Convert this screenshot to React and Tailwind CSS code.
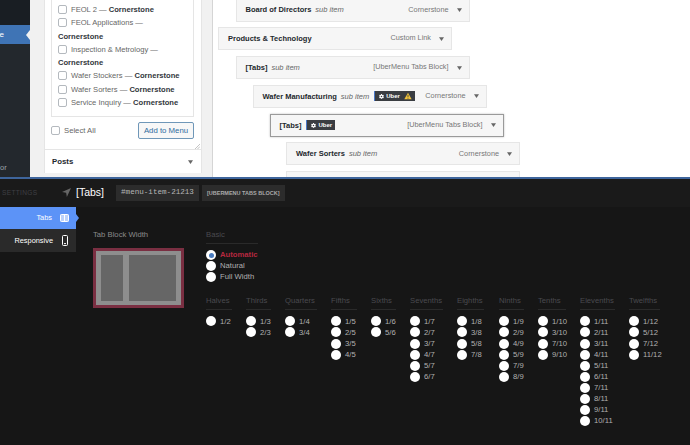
import React from "react";
import { FaCog } from "react-icons/fa";

function Check({ children }) {
  return (
    <div className="text-[7.6px] leading-[13.3px] text-[#666]">
      <span className="inline-block w-[9px] h-[9px] border border-[#b4b9be] rounded-[2px] bg-white align-[-2px] mr-[4px]" />
      {children}
    </div>
  );
}

function Bold({ children }) {
  return <b className="text-[#32373c]">{children}</b>;
}

function MenuItem({ indent, title, sub, type, badge, warn, active }) {
  return (
    <div
      className={`flex items-center h-[23px] mb-[5.8px] pl-[9px] pr-[7px] bg-[#f6f6f6] border ${active ? "border-[#9a9a9a] shadow-[0_0_2px_rgba(0,0,0,0.25)]" : "border-[#e6e6e6]"} w-[234px] shrink-0`}
      style={{ marginLeft: indent }}
    >
      <span className="text-[7.5px] font-bold text-[#23282d] whitespace-nowrap">{title}</span>
      {sub && <span className="text-[7.5px] italic text-[#666] ml-[4px] whitespace-nowrap">sub item</span>}
      {badge && (
        <span className="ml-[5px] h-[10px] flex items-center gap-[2px] bg-[#3a3d42] border-l border-[#4a78c8] pl-[4px] pr-[3px] text-[6px] font-bold text-white whitespace-nowrap">
          <FaCog className="w-[5px] h-[5px]" />Uber
          {warn && (
            <svg viewBox="0 0 10 10" className="w-[8px] h-[8px] ml-[2px]">
              <path d="M5 .8 9.6 9.2H.4Z" fill="#f0c33c" />
              <path d="M5 3.5v3M5 7.4v.9" stroke="#333" strokeWidth="1" />
            </svg>
          )}
        </span>
      )}
      <span className="ml-auto text-[7.3px] text-[#777] whitespace-nowrap">{type}</span>
      <svg viewBox="0 0 8 6" className="w-[5px] h-[4px] ml-[8px]"><path d="M0 0h8L4 6Z" fill="#666" /></svg>
    </div>
  );
}

function Radio({ label, selected, red }) {
  return (
    <div className="flex items-center h-[11.1px] gap-[4px]">
      <span className="w-[10px] h-[10px] rounded-full bg-white flex items-center justify-center shrink-0">
        {selected && <span className="w-[5px] h-[5px] rounded-full bg-[#4a7cc0]" />}
      </span>
      <span className={`text-[7.7px] whitespace-nowrap ${red ? "font-bold text-[#b5283f]" : "text-[#b0b0b0]"}`}>{label}</span>
    </div>
  );
}

const groups = [
  ["Halves", 40, 26, ["1/2"]],
  ["Thirds", 39, 25, ["1/3", "2/3"]],
  ["Quarters", 46, 32, ["1/4", "3/4"]],
  ["Fifths", 40, 26, ["1/5", "2/5", "3/5", "4/5"]],
  ["Sixths", 39, 25, ["1/6", "5/6"]],
  ["Sevenths", 47, 33, ["1/7", "2/7", "3/7", "4/7", "5/7", "6/7"]],
  ["Eighths", 42, 27, ["1/8", "3/8", "5/8", "7/8"]],
  ["Ninths", 39, 25, ["1/9", "2/9", "4/9", "5/9", "7/9", "8/9"]],
  ["Tenths", 42, 28, ["1/10", "3/10", "7/10", "9/10"]],
  ["Elevenths", 49, 35, ["1/11", "2/11", "3/11", "4/11", "5/11", "6/11", "7/11", "8/11", "9/11", "10/11"]],
  ["Twelfths", 46, 31, ["1/12", "5/12", "7/12", "11/12"]],
];

function Group({ name, width, line, items }) {
  return (
    <div style={{ width }} className="shrink-0">
      <div className="text-[7.7px] text-[#4a4a4f] leading-[10px] pb-[3px] border-b border-[#2a2a2a] whitespace-nowrap" style={{ width: line }}>{name}</div>
      <div className="mt-[6px]">
        {items.map((i) => <Radio key={i} label={i} />)}
      </div>
    </div>
  );
}

export default function App() {
  return (
    <div className="w-[690px] h-[445px] overflow-hidden flex flex-col bg-[#161616] antialiased" style={{ fontFamily: '"Liberation Sans", Arial, sans-serif' }}>
      <div className="h-[177px] shrink-0 flex overflow-hidden bg-[#f1f1f1]">
        {/* WP admin sidebar */}
        <div className="w-[30px] shrink-0 bg-[#23282d] flex flex-col relative">
          <div className="h-[25px] bg-[#191e23]" />
          <div className="h-[19px] bg-[#3f74b5] flex items-center justify-end pr-[26px] text-[8px] text-white relative">
            e
            <span className="absolute right-0 top-[5px] w-0 h-0 border-y-[5px] border-y-transparent border-r-[4px] border-r-[#f1f1f1]" />
          </div>
          <div className="mt-auto mb-[4px] text-[7.5px] leading-[10px] text-[#9ea3a8]">or</div>
        </div>
        {/* menu panel column */}
        <div className="w-[14px] shrink-0" />
        <div className="w-[157.5px] h-[173px] shrink-0 bg-white border-x border-[#e5e5e5] flex flex-col relative">
          <div className="ml-[6px] w-[143px] h-[117px] shrink-0 border border-t-0 border-[#e5e5e5] pl-[6px] pt-[3px] overflow-hidden">
            <Check>FEOL 2 — <Bold>Cornerstone</Bold></Check>
            <Check>FEOL Applications —<br /><Bold>Cornerstone</Bold></Check>
            <Check>Inspection &amp; Metrology —<br /><Bold>Cornerstone</Bold></Check>
            <Check>Wafer Stockers — <Bold>Cornerstone</Bold></Check>
            <Check>Wafer Sorters — <Bold>Cornerstone</Bold></Check>
            <Check>Service Inquiry — <Bold>Cornerstone</Bold></Check>
          </div>
          <div className="flex items-center justify-between ml-[6px] w-[143px] mt-[5px]">
            <span className="flex items-center gap-[4px] text-[7.7px] text-[#666]">
              <span className="w-[9px] h-[9px] border border-[#b4b9be] rounded-[2px]" />Select All
            </span>
            <span className="h-[17px] w-[56px] flex items-center justify-center border border-[#6f97b8] rounded-[2px] bg-[#f7f7f7] text-[7.8px] text-[#2f6c9e]">Add to Menu</span>
          </div>
          <svg viewBox="0 0 5 5" className="absolute right-[1px] top-[144px] w-[5px] h-[5px]"><path d="M0 5 5 0M2.5 5 5 2.5" stroke="#aaa" strokeWidth=".7" /></svg>
          <div className="mt-[10px] border-t border-[#e5e5e5] h-[24px] flex items-center justify-between px-[7px]">
            <span className="text-[7.8px] font-bold text-[#23282d]">Posts</span>
            <svg viewBox="0 0 8 6" className="w-[5px] h-[4px] mr-[1px]"><path d="M0 0h8L4 6Z" fill="#666" /></svg>
          </div>
        </div>
        <div className="w-[10.5px] shrink-0" />
        {/* menu structure */}
        <div className="flex-1 bg-white border-l border-[#d5d5d5] pl-[5px] flex flex-col overflow-hidden">
          <div className="-mt-[1.5px]">
            <MenuItem indent={17.5} title="Board of Directors" sub type="Cornerstone" />
            <MenuItem indent={0} title="Products & Technology" type="Custom Link" />
            <MenuItem indent={17.5} title="[Tabs]" sub type="[UberMenu Tabs Block]" />
            <MenuItem indent={34.5} title="Wafer Manufacturing" sub badge warn type="Cornerstone" />
            <MenuItem indent={51.5} title="[Tabs]" badge active type="[UberMenu Tabs Block]" />
            <MenuItem indent={68} title="Wafer Sorters" sub type="Cornerstone" />
            <div className="ml-[68px] w-[234px] h-[23px] bg-[#f6f6f6] border border-[#e6e6e6]" />
          </div>
        </div>
      </div>
      <div className="h-[2px] shrink-0 bg-[#3e659c]" />
      {/* Settings header */}
      <div className="h-[27.5px] shrink-0 flex items-center bg-[#1a1a1a]">
        <span className="ml-[2px] text-[6.6px] tracking-[0.3px] text-[#3f3f44] w-[60px]">SETTINGS</span>
        <svg viewBox="0 0 10 10" className="w-[9px] h-[9px]"><path d="M10 0 0 4.5l4.6.8L5.4 10Z" fill="#666" /></svg>
        <span className="ml-[5px] text-[10.5px] text-white">[Tabs]</span>
        <span className="ml-[12px] h-[16px] flex items-center px-[5px] bg-[#2c2c2c] font-['Liberation_Mono'] text-[7.6px] text-[#b5b5b5]">#menu-item-21213</span>
        <span className="ml-[3px] h-[16px] flex items-center px-[5px] bg-[#2c2c2c] text-[5.5px] font-bold text-[#aaa]">[UBERMENU TABS BLOCK]</span>
      </div>
      {/* Body */}
      <div className="flex-1 flex bg-[#161616]">
        <div className="w-[76px] shrink-0 flex flex-col">
          <div className="h-[22.5px] bg-[#5c93f7] flex items-center justify-end pr-[7px] gap-[8px] text-[7.4px] text-white relative">
            Tabs
            <svg viewBox="0 0 9 8" className="w-[9px] h-[8px]"><rect x=".5" y=".5" width="8" height="7" rx=".8" fill="#bcd2fb" stroke="#fff" /><path d="M4.5 .5v7" stroke="#fff" /></svg>
            <span className="absolute -right-[3px] top-[7px] w-0 h-0 border-y-[4px] border-y-transparent border-l-[3px] border-l-[#5c93f7]" />
          </div>
          <div className="h-[23px] bg-[#2a2a2a] flex items-center justify-end pr-[8px] gap-[9px] text-[7.4px] text-white">
            Responsive
            <svg viewBox="0 0 6 11" className="w-[6px] h-[11px]"><rect x=".5" y=".5" width="5" height="10" rx="1" fill="none" stroke="#fff" /><path d="M2 8.6h2" stroke="#fff" /></svg>
          </div>
        </div>
        <div className="flex-1 flex pl-[17px] pt-[22px]">
          <div className="w-[113px] shrink-0">
            <div className="text-[7.7px] leading-[12px] text-[#8a8a8a]">Tab Block Width</div>
            <div className="mt-[7px] w-[91px] h-[60px] border-[3px] border-[#7a2f42] bg-[#8e8e8e] px-[5px] py-[4px] flex gap-[6px]">
              <div className="w-[22px] bg-[#666]" />
              <div className="flex-1 bg-[#666]" />
            </div>
          </div>
          <div className="flex-1">
            <div className="w-[52px] text-[7.7px] leading-[12px] text-[#4a4a4f] pb-[2px] border-b border-[#2a2a2a]">Basic</div>
            <div className="mt-[6px]">
              <Radio label="Automatic" selected red />
              <Radio label="Natural" />
              <Radio label="Full Width" />
            </div>
            <div className="flex mt-[13px]">
              {groups.map(([n, w, l, items]) => (
                <Group key={n} name={n} width={w} line={l} items={items} />
              ))}
            </div>
          </div>
        </div>
      </div>
    </div>
  );
}
